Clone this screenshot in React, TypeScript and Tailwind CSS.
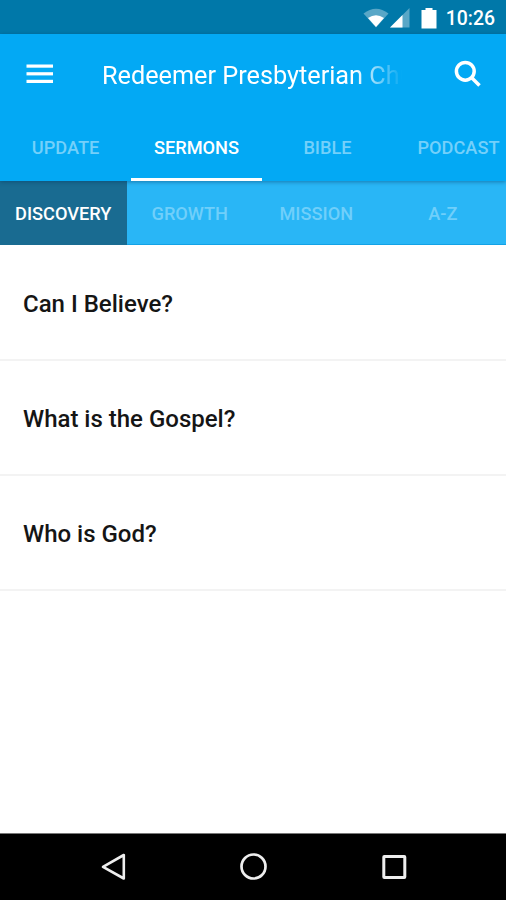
const tabs = ["UPDATE", "SERMONS", "BIBLE", "PODCAST"];
const categories = ["DISCOVERY", "GROWTH", "MISSION", "A-Z"];
const topics = ["Can I Believe?", "What is the Gospel?", "Who is God?"];

function StatusBar() {
  return (
    <div className="flex h-[34px] shrink-0 items-center justify-end bg-[#0078a9] pr-[11px] text-white">
      <svg width="26" height="20" viewBox="0 0 26 20" className="mt-0.5">
        <path d="M0.5 5.5Q13 -4 25.5 5.5L13 19.5Z" fill="#fff" fillOpacity="0.35" />
        <path d="M5 10Q13 4.4 21 10L13 19Z" fill="#fff" />
      </svg>
      <svg width="20" height="20" viewBox="0 0 20 20" className="mt-0.5 ml-px">
        <path d="M0 19.5L19.5 0V19.5Z" fill="#fff" fillOpacity="0.35" />
        <path d="M0 19.5L12.5 7V19.5Z" fill="#fff" />
      </svg>
      <svg width="16" height="21" viewBox="0 0 16 21" className="mt-0.5 ml-[11px]">
        <path d="M4.5 0H11.5V2H15.5V20.5H0.5V2H4.5Z" fill="#fff" />
      </svg>
      <span className="mt-[3px] ml-[9px] text-[19.4px] leading-none font-medium">10:26</span>
    </div>
  );
}

function AppBar() {
  return (
    <div className="flex h-20 shrink-0 items-center pr-6 pl-[26px] text-white">
      <svg width="28" height="20" viewBox="0 0 28 20" fill="#fff">
        <rect x="0.5" y="0.5" width="26.5" height="3.2" />
        <rect x="0.5" y="8.2" width="26.5" height="3.2" />
        <rect x="0.5" y="15.8" width="26.5" height="3.2" />
      </svg>
      <h1 className="mt-[3px] ml-12 w-[300px] overflow-hidden mask-r-from-84% mask-r-to-100% text-[25.25px] leading-8 whitespace-nowrap">
        Redeemer Presbyterian Church
      </h1>
      <svg width="28" height="28" viewBox="0 0 28 28" fill="none" stroke="#fff" strokeWidth="3.5" className="ml-auto">
        <circle cx="11.3" cy="11.3" r="8.9" />
        <path d="M17.7 17.7L25.5 25.5" />
      </svg>
    </div>
  );
}

function Tabs() {
  return (
    <div className="flex h-[67px] shrink-0 overflow-hidden text-[18.2px] font-medium">
      {tabs.map((tab) => (
        <div
          key={tab}
          className={
            tab === "SERMONS"
              ? "flex w-[131px] shrink-0 items-center justify-center border-b-[3px] border-white pt-[3px] text-white"
              : "flex w-[131px] shrink-0 items-center justify-center text-[#74d0fa]"
          }
        >
          {tab}
        </div>
      ))}
    </div>
  );
}

function Categories() {
  return (
    <div className="grid h-16 shrink-0 grid-cols-4 border-b border-[#13a2e6] bg-[#29b6f6] text-[18.2px] font-medium">
      {categories.map((category) => (
        <div
          key={category}
          className={
            category === "DISCOVERY"
              ? "-mb-px flex items-center justify-center bg-[#196b91] pt-0.5 text-white"
              : "flex items-center justify-center pt-0.5 text-[#70cffa]"
          }
        >
          {category}
        </div>
      ))}
    </div>
  );
}

function NavBar() {
  return (
    <div className="flex h-[67px] shrink-0 items-center justify-between border-t border-[#777] bg-black px-[99px]">
      <svg width="28" height="30" viewBox="0 0 28 30" fill="none" stroke="#eee" strokeWidth="2.6">
        <path d="M24.8 3V26.5L4 14.8Z" strokeLinejoin="round" />
      </svg>
      <svg width="30" height="30" viewBox="0 0 30 30" fill="none" stroke="#eee" strokeWidth="2.7">
        <circle cx="15.5" cy="14.5" r="12" />
      </svg>
      <svg width="28" height="30" viewBox="0 0 28 30" fill="none" stroke="#eee" strokeWidth="3">
        <rect x="4.8" y="4.5" width="21" height="21" rx="0.5" />
      </svg>
    </div>
  );
}

export default function App() {
  return (
    <div className="flex h-[900px] w-[506px] flex-col overflow-hidden bg-white font-['Roboto',sans-serif]">
      <StatusBar />
      <header className="z-10 bg-[#03a9f4] shadow-[0_1px_4px_rgba(0,50,90,0.45)]">
        <AppBar />
        <Tabs />
      </header>
      <Categories />
      <main className="flex-1 pt-px">
        {topics.map((topic) => (
          <div
            key={topic}
            className="flex h-[115px] items-center border-b-2 border-[#f3f3f3] pt-[3px] pl-[23px] text-[24px] font-medium text-[#151515]"
          >
            {topic}
          </div>
        ))}
      </main>
      <NavBar />
    </div>
  );
}
